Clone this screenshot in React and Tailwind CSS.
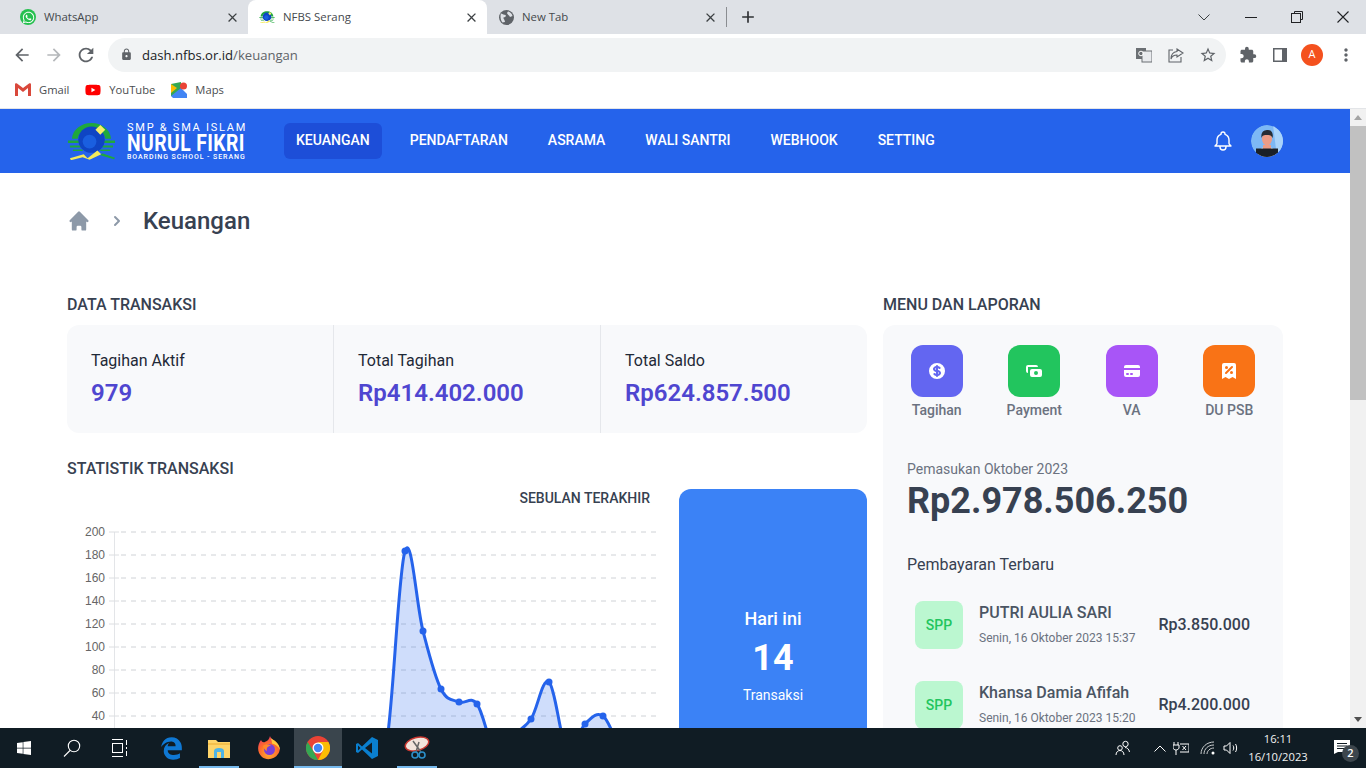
import React from "react";
import { HiCurrencyDollar, HiCash, HiCreditCard, HiReceiptTax, HiHome, HiChevronRight, HiOutlineBell } from "react-icons/hi";
import { MdArrowBack, MdArrowForward, MdRefresh, MdLock, MdStarBorder, MdExtension, MdClose, MdAdd, MdMoreVert } from "react-icons/md";
import { FaWhatsapp, FaWindows, FaYoutube, FaEdgeLegacy } from "react-icons/fa";

const ui = "font-['Open_Sans','Noto_Sans',sans-serif]";

function Logo({ size = 16 }) {
  return (
    <svg width={size} height={size * 0.78} viewBox="0 0 50 39">
      <path d="M5 17C6 7 15 1 25 1C35 1 44 7 45 17H39C38 11 32 7 25 7C18 7 12 11 11 17Z" fill="#1fa83c" />
      <path d="M1 19H13V21.5H1ZM3 24H14V26H3ZM6 28H16V29.5H6ZM37 19H49V21.5H37ZM36 24H47V26H36ZM34 28H44V29.5H34Z" fill="#1fa83c" />
      <circle cx="25" cy="18" r="13.5" fill="#0f45c4" />
      <circle cx="23" cy="20" r="7" fill="#1a5fe0" />
      <path d="M34 3L39 8L34 13L29 8Z" fill="#f6ee6a" />
      <path d="M3 37L17 33L21 37L31 29L35 33L23 38.5L16 36L4 39Z" fill="#f4ea5a" />
      <path d="M36 32L49 36.5L48 38L34 34Z" fill="#1fa83c" />
    </svg>
  );
}

function Tab({ icon, title, active }) {
  return (
    <div className={`w-[239px] h-[34px] flex items-center pl-[11px] pr-[8px] shrink-0 ${active ? "bg-white rounded-t-lg" : ""}`}>
      <span className="w-4 h-4 flex items-center justify-center shrink-0">{icon}</span>
      <span className="ml-[8px] text-[11.4px] text-[#45494d] flex-1 whitespace-nowrap">{title}</span>
      <MdClose className="text-[15px] text-[#3c4043]" />
    </div>
  );
}

function Bookmark({ icon, label }) {
  return (
    <div className="flex items-center gap-2 mr-[16px]">
      <span className="w-4 h-4 flex items-center justify-center">{icon}</span>
      <span className="text-[11.2px] text-[#4a4d50]">{label}</span>
    </div>
  );
}

function ChromeTop() {
  return (
    <div className={`${ui} shrink-0`}>
      <div className="h-[34px] bg-[#dee1e6] flex items-center pl-[9px]">
        <Tab
          icon={<span className="w-[16px] h-[16px] rounded-full bg-[#25c04f] flex items-center justify-center"><FaWhatsapp className="text-white text-[13px]" /></span>}
          title="WhatsApp"
        />
        <Tab active icon={<Logo />} title="NFBS Serang" />
        <Tab
          icon={
            <svg width="15" height="15" viewBox="0 0 15 15">
              <circle cx="7.5" cy="7.5" r="7.5" fill="#5f6368" />
              <path d="M2 3.5C4 4 5 5 6.5 5C7.5 6 6 7.5 4.5 7.5C4 9 6 9.5 6 12L3.5 12.5C1.5 10 1 6 2 3.5ZM9 1.5C11 2 13 3.5 13.5 6L11 7C10 5 8 4 8 3Z" fill="#dee1e6" />
            </svg>
          }
          title="New Tab"
        />
        <div className="w-px h-[20px] bg-[#8a8d91]" />
        <MdAdd className="text-[20px] text-[#2f3235] ml-[11px]" />
        <div className="flex-1" />
        <div className="flex items-center text-[#3c4043]">
          <svg width="12" height="7" viewBox="0 0 12 7" fill="none" stroke="#3c4043" className="mr-[35px]"><path d="M.5.5L6 6L11.5.5" /></svg>
          <div className="w-[12px] h-px bg-[#202124] mr-[34px]" />
          <svg width="12" height="12" viewBox="0 0 12 12" fill="none" stroke="#202124" className="mr-[34px]"><path d="M3.5 2.5V.5H11.5V8.5H9.5" /><rect x=".5" y="2.5" width="9" height="9" /></svg>
          <svg width="12" height="12" viewBox="0 0 12 12" stroke="#202124" strokeWidth="1.1" className="mr-[17px]"><path d="M.5.5L11.5 11.5M11.5.5L.5 11.5" /></svg>
        </div>
      </div>
      <div className="h-[41px] bg-white flex items-center pl-[12px]">
        <MdArrowBack className="text-[20px] text-[#5f6368] shrink-0" />
        <MdArrowForward className="text-[20px] text-[#b5b8bb] ml-[12px] shrink-0" />
        <MdRefresh className="text-[22px] text-[#5f6368] ml-[11px] shrink-0" />
        <div className="ml-[11px] w-[1118px] h-[34px] shrink-0 rounded-full bg-[#f1f3f4] flex items-center pl-[12px] pr-[9px]">
          <MdLock className="text-[13px] text-[#5f6368]" />
          <span className="ml-[9px] mt-[2px] text-[13.1px] text-[#202124] whitespace-nowrap">dash.nfbs.or.id<span className="text-[#5f6368]">/keuangan</span></span>
          <div className="flex-1" />
          <svg width="16" height="16" viewBox="0 0 16 16" className="mr-[16px]"><rect x="0" y="1" width="10" height="11" fill="#6b6f73" /><rect x="6" y="4" width="10" height="11" fill="#e8eaed" stroke="#6b6f73" /><circle cx="5" cy="6.5" r="2.3" fill="none" stroke="#fff" /></svg>
          <svg width="16" height="16" viewBox="0 0 16 16" fill="none" stroke="#5f6368" strokeWidth="1.1" className="mr-[15px]"><path d="M5 3H1V15H13V10" /><path d="M9 2L15 6L9 10V8C6 8 4 9 3 12C3 8 5 5 9 4.5Z" /></svg>
          <MdStarBorder className="text-[18px] text-[#5f6368]" />
        </div>
        <MdExtension className="text-[18px] text-[#5f6368] ml-[13px] shrink-0" />
        <svg width="14" height="14" viewBox="0 0 14 14" className="ml-[16px] shrink-0"><path d="M0 0H14V14H0ZM1.5 1.5V12.5H9V1.5Z" fill="#5f6368" fillRule="evenodd" /><rect x="9" y="1" width="4" height="12" fill="#5f6368" /></svg>
        <span className="ml-[14px] w-[22px] h-[22px] rounded-full bg-[#f4511e] text-white text-[11px] flex items-center justify-center shrink-0">A</span>
        <MdMoreVert className="text-[20px] text-[#5f6368] ml-[13px] shrink-0" />
      </div>
      <div className="h-[34px] bg-white flex items-center pl-[15px] pb-[3px] border-b border-[#e3e5e8]">
        <Bookmark
          label="Gmail"
          icon={<svg width="16" height="13" viewBox="0 0 16 13"><path d="M0 1.5C0 .5 1 0 2 .6L8 5L14 .6C15 0 16 .5 16 1.5V13H13V5L8 9L3 5V13H0Z" fill="#d9483b" /></svg>}
        />
        <Bookmark label="YouTube" icon={<FaYoutube className="text-[#f00] text-[18px]" />} />
        <Bookmark
          label="Maps"
          icon={<svg width="16" height="16" viewBox="0 0 16 16"><path d="M0 2L10 0V16L0 14Z" fill="#34a853" /><path d="M0 14L10 6L16 12V16H2Z" fill="#4285f4" /><path d="M0 2L6 6L0 11Z" fill="#fbbc04" /><circle cx="12.5" cy="4" r="3.5" fill="#ea4335" /></svg>}
        />
      </div>
    </div>
  );
}

const NAV = ["KEUANGAN", "PENDAFTARAN", "ASRAMA", "WALI SANTRI", "WEBHOOK", "SETTING"];

function Header() {
  return (
    <header className="h-16 bg-[#2563eb] flex items-center px-[67px] shrink-0">
      <div className="w-[178px] flex items-center shrink-0">
        <Logo size={49} />
        <div className="ml-[11px] text-white w-[118px] leading-none">
          <div className="text-[11px] leading-[12px] tracking-[1.75px] whitespace-nowrap">SMP &amp; SMA ISLAM</div>
          <div className="text-[23px] leading-[19px] font-bold whitespace-nowrap origin-left scale-x-[0.84] tracking-[0.5px]">NURUL FIKRI</div>
          <div className="text-[7px] leading-[8px] font-medium tracking-[0.93px] whitespace-nowrap">BOARDING SCHOOL - SERANG</div>
        </div>
      </div>
      <nav className="ml-[39px] flex items-center gap-4">
        {NAV.map((n, i) => (
          <div key={n} className={`h-9 px-3 pb-[2px] rounded-md flex items-center text-sm font-medium text-white ${i === 0 ? "bg-[#1d4ed8]" : ""}`}>{n}</div>
        ))}
      </nav>
      <div className="flex-1" />
      <HiOutlineBell className="text-white text-[24px] mr-[16px]" strokeWidth={1.4} />
      <svg width="32" height="32" viewBox="0 0 32 32" className="rounded-full">
        <circle cx="16" cy="16" r="16" fill="#7db8f5" />
        <path d="M22 0H32V32H26Z" fill="#a9d3fb" />
        <path d="M6 32C7 24 11 22 16 22C21 22 25 24 26 32Z" fill="#f4f6f8" />
        <path d="M12 20H20V24L16 27L12 24Z" fill="#ec9c86" />
        <ellipse cx="16" cy="14" rx="5" ry="6.5" fill="#ec9c86" />
        <path d="M10.5 13C9.5 6 14 5 17 5C21 5 22.5 9 21.5 13C20.5 10 18 10 16 10C13 10 11.5 10 10.5 13Z" fill="#262d36" />
        <rect x="5" y="23.5" width="22" height="8.5" fill="#1a2028" />
      </svg>
    </header>
  );
}

const pts = [[351, 770], [369, 770], [387, 740], [405, 551], [423, 631], [441, 689], [459, 702], [477, 704], [495, 750], [513, 735], [531, 719], [549, 682], [567, 750], [585, 724], [603, 716], [621, 750], [639, 770]];

function smooth(p) {
  const t = 0.18;
  let d = `M${p[0][0]} ${p[0][1]}`;
  for (let i = 0; i < p.length - 1; i++) {
    const a = p[Math.max(i - 1, 0)], b = p[i], c = p[i + 1], e = p[Math.min(i + 2, p.length - 1)];
    d += ` C${b[0] + (c[0] - a[0]) * t} ${b[1] + (c[1] - a[1]) * t} ${c[0] - (e[0] - b[0]) * t} ${c[1] - (e[1] - b[1]) * t} ${c[0]} ${c[1]}`;
  }
  return d;
}

function Chart() {
  const ticks = [200, 180, 160, 140, 120, 100, 80, 60, 40];
  const line = smooth(pts);
  return (
    <svg width="600" height="280" viewBox="67 520 600 280" className="block">
      <line x1="114.5" y1="532" x2="114.5" y2="780" stroke="#e3e5e8" />
      {ticks.map((v, i) => {
        const y = 532 + i * 23;
        return (
          <g key={v}>
            <line x1="109" x2="119" y1={y} y2={y} stroke="#dcdee1" />
            <line x1="121" x2="661" y1={y} y2={y} stroke="#cfd2d6" strokeDasharray="5 5" />
            <text x="105" y={y + 4} textAnchor="end" fontSize="12" fill="#666" fontFamily="'Liberation Sans',sans-serif">{v}</text>
          </g>
        );
      })}
      <path d={`${line} L639 780 L351 780 Z`} fill="#2563eb" fillOpacity="0.22" />
      <path d={line} fill="none" stroke="#2563eb" strokeWidth="3" />
      {pts.slice(2, -1).map(([x, y]) => <circle key={x} cx={x} cy={y} r="3.5" fill="#2563eb" />)}
    </svg>
  );
}

function Stat({ label, value, border }) {
  return (
    <div className={`flex-1 h-full pl-6 pt-[24px] ${border ? "border-l border-[#e5e7eb]" : ""}`}>
      <div className="text-base leading-[24px] text-[#1f2937]">{label}</div>
      <div className="text-2xl leading-[32px] font-semibold text-[#4f46d0] mt-[4px]">{value}</div>
    </div>
  );
}

function Left() {
  return (
    <div className="w-[800px] shrink-0">
      <h2 className="text-base leading-6 font-medium text-[#374151]">DATA TRANSAKSI</h2>
      <div className="mt-2 h-[108px] rounded-xl bg-[#f8f9fb] flex">
        <Stat label="Tagihan Aktif" value="979" />
        <Stat label="Total Tagihan" value="Rp414.402.000" border />
        <Stat label="Total Saldo" value="Rp624.857.500" border />
      </div>
      <h2 className="mt-6 text-base leading-6 font-medium text-[#374151]">STATISTIK TRANSAKSI</h2>
      <div className="mt-2 flex">
        <div className="w-[612px] shrink-0">
          <div className="pr-[29px] text-right text-sm leading-[18px] font-medium text-[#374151]">SEBULAN TERAKHIR</div>
          <div className="mt-[13px]"><Chart /></div>
        </div>
        <div className="w-[188px] h-[333px] rounded-xl bg-[#3b82f6] text-white flex flex-col items-center justify-center">
          <div className="text-lg leading-6 font-medium">Hari ini</div>
          <div className="text-4xl leading-[40px] font-bold mt-[7px]">14</div>
          <div className="text-sm leading-5 mt-[7px]">Transaksi</div>
        </div>
      </div>
    </div>
  );
}

function Menu({ icon, label, bg }) {
  return (
    <div className="flex flex-col items-center">
      <div className={`w-[52px] h-[52px] rounded-xl flex items-center justify-center text-white text-[20px] ${bg}`}>{icon}</div>
      <div className="mt-[3px] text-sm leading-5 font-medium text-[#6b7280]">{label}</div>
    </div>
  );
}

function Pay({ name, date, amount }) {
  return (
    <div className="flex items-center h-[48px] pl-2 pr-[9px] mb-[32px]">
      <div className="w-12 h-12 rounded-lg bg-[#bbf7d0] text-[#22c55e] text-sm font-medium flex items-center justify-center shrink-0">SPP</div>
      <div className="ml-4 flex-1">
        <div className="text-base leading-[22px] font-medium text-[#4b5563] whitespace-nowrap -mt-[3px]">{name}</div>
        <div className="text-xs leading-4 text-[#6b7280] mt-[6px] whitespace-nowrap">{date}</div>
      </div>
      <div className="text-base font-medium text-[#374151]">{amount}</div>
    </div>
  );
}

function Right() {
  return (
    <div className="w-[400px] shrink-0">
      <h2 className="text-base leading-6 font-medium text-[#374151]">MENU DAN LAPORAN</h2>
      <div className="mt-2 rounded-xl bg-[#f8f9fb] pt-5 h-[520px]">
        <div className="grid grid-cols-4 px-[5px]">
          <Menu bg="bg-[#6366f1]" label="Tagihan" icon={<HiCurrencyDollar className="text-[20px]" />} />
          <Menu bg="bg-[#22c55e]" label="Payment" icon={<HiCash className="text-[20px]" />} />
          <Menu bg="bg-[#a855f7]" label="VA" icon={<HiCreditCard className="text-[20px]" />} />
          <Menu bg="bg-[#f97316]" label="DU PSB" icon={<HiReceiptTax className="text-[20px]" />} />
        </div>
        <div className="px-6">
          <div className="mt-[39px] text-sm leading-5 text-[#6b7280]">Pemasukan Oktober 2023</div>
          <div className="mt-[2px] text-4xl leading-[40px] font-bold text-[#374151]">Rp2.978.506.250</div>
          <div className="mt-8 text-base leading-6 text-[#374151]">Pembayaran Terbaru</div>
          <div className="mt-6">
            <Pay name="PUTRI AULIA SARI" date="Senin, 16 Oktober 2023 15:37" amount="Rp3.850.000" />
            <Pay name="Khansa Damia Afifah" date="Senin, 16 Oktober 2023 15:20" amount="Rp4.200.000" />
          </div>
        </div>
      </div>
    </div>
  );
}

function Scrollbar() {
  return (
    <div className="w-4 shrink-0 bg-[#f1f1f1] flex flex-col items-center">
      <div className="h-[17px] flex items-center justify-center"><div className="w-0 h-0 border-x-[4px] border-x-transparent border-b-[5px] border-b-[#a3a3a3]" /></div>
      <div className="w-full h-[274px] bg-[#c1c1c1]" />
      <div className="flex-1" />
      <div className="h-[17px] flex items-center justify-center"><div className="w-0 h-0 border-x-[4px] border-x-transparent border-t-[5px] border-t-[#505050]" /></div>
    </div>
  );
}

function TaskBtn({ children, open, active, className = "" }) {
  return (
    <div className={`relative w-12 h-10 flex items-center justify-center shrink-0 ${active ? "bg-[#3a454d]" : ""} ${className}`}>
      {children}
      {open && <div className={`absolute bottom-0 h-[2px] bg-[#76b9ed] ${active ? "inset-x-0" : "inset-x-[4px]"}`} />}
    </div>
  );
}

function Taskbar() {
  return (
    <div className={`h-10 bg-[#101c24] flex items-center shrink-0 text-white ${ui}`}>
      <TaskBtn><FaWindows className="text-[16px]" /></TaskBtn>
      <TaskBtn>
        <svg width="18" height="18" viewBox="0 0 18 18" fill="none" stroke="#fff" strokeWidth="1.1"><circle cx="11" cy="7" r="5.7" /><path d="M7 11.5L1 17.5" /></svg>
      </TaskBtn>
      <TaskBtn>
        <svg width="18" height="18" viewBox="0 0 18 18" fill="none" stroke="#fff"><path d="M1 .5H12M1 17.5H12" /><rect x="1.5" y="4.5" width="10" height="9" /><path d="M15.5 1V6M15.5 8V10M15.5 12V17" /></svg>
      </TaskBtn>
      <TaskBtn className="ml-[3px]"><FaEdgeLegacy className="text-[#0f78d4] text-[23px]" /></TaskBtn>
      <TaskBtn open>
        <svg width="22" height="20" viewBox="0 0 22 20"><path d="M0 2H8L10 4H22V20H0Z" fill="#ffd56a" /><path d="M0 5H22V7H0Z" fill="#f5c04c" /><path d="M6 20V13C6 11 8 10 11 10C14 10 16 11 16 13V20H13V14H9V20Z" fill="#4fb4e6" /></svg>
      </TaskBtn>
      <TaskBtn className="ml-[2px]">
        <svg width="24" height="24" viewBox="0 0 24 24">
          <defs>
            <radialGradient id="ff" cx="0.5" cy="0.75" r="0.8"><stop offset="0" stopColor="#ffb32c" /><stop offset="0.55" stopColor="#ff6a2c" /><stop offset="1" stopColor="#e8336d" /></radialGradient>
          </defs>
          <path d="M4 4C5 6 6 6.5 8 6C10 5 12 4 13 0C14 3 15 3 18 5C23 9 24 14 21 18C18 23 10 25 5 21C0 17 0 9 4 4Z" fill="url(#ff)" />
          <path d="M13 0C14 3 15 3 18 5C21 7.5 23 11 23 14C21 10 18 8 15 7.5C15 5 14 3 13 0Z" fill="#ffc93c" />
          <circle cx="12.5" cy="13.5" r="5.5" fill="#7b3fd6" />
          <path d="M6 10C8 8 12 8 14 9.5C11 10 9 12 10 15C8 14 6.5 12.5 6 10Z" fill="#ff8a2c" />
        </svg>
      </TaskBtn>
      <TaskBtn open active className="ml-px">
        <svg width="24" height="24" viewBox="0 0 24 24">
          <circle cx="12" cy="12" r="12" fill="#ea4335" />
          <path d="M12 24A12 12 0 0 1 1.6 6L7 14.5L12 24Z" fill="#34a853" />
          <path d="M12 24A12 12 0 0 0 22.4 6H12L17 14.5Z" fill="#fbbc04" />
          <circle cx="12" cy="12" r="5.5" fill="#fff" />
          <circle cx="12" cy="12" r="4.2" fill="#4285f4" />
        </svg>
      </TaskBtn>
      <TaskBtn className="ml-px">
        <svg width="24" height="24" viewBox="0 0 24 24">
          <path d="M17 1L23 4V20L17 23L7 13.5L3 17L1 16V8L3 7L7 10.5Z" fill="#0a7fcf" />
          <path d="M17 6.5L10 12L17 17.5Z" fill="#101c24" />
          <path d="M3 9.5L5.5 12L3 14.5Z" fill="#101c24" />
        </svg>
      </TaskBtn>
      <TaskBtn open className="ml-[2px]">
        <svg width="26" height="24" viewBox="0 0 26 24">
          <ellipse cx="13" cy="8" rx="12" ry="6.5" transform="rotate(-15 13 8)" fill="#f2e4dc" stroke="#c9362f" strokeWidth="1.5" />
          <path d="M9 5L17 16M15 6L12 16" stroke="#666" strokeWidth="1.5" />
          <circle cx="11" cy="19" r="3" fill="none" stroke="#2b8fc9" strokeWidth="1.6" />
          <circle cx="18" cy="19" r="3" fill="none" stroke="#2b8fc9" strokeWidth="1.6" />
        </svg>
      </TaskBtn>
      <div className="flex-1" />
      <svg width="16" height="16" viewBox="0 0 16 16" fill="none" stroke="#fff" className="mr-[23px]"><circle cx="10.5" cy="4" r="2.7" /><circle cx="5" cy="8" r="2.3" /><path d="M14.5 12C14 9 12 7.5 10 7.5M1 15C1 12 3 10.5 5 10.5S9 12 9 15" /></svg>
      <svg width="12" height="7" viewBox="0 0 12 7" fill="none" stroke="#fff" className="mr-[7px]"><path d="M.5 6.5L6 1L11.5 6.5" /></svg>
      <svg width="16" height="14" viewBox="0 0 16 14" fill="none" stroke="#fff" className="mr-[11px]"><path d="M1 1V4M5 1V4M0 4H6V7C6 8 4 9 3 9S0 8 0 7ZM3 9V14" /><path d="M7 3H16V11H7" /><path d="M9.5 5L13 9M13 5L9.5 9" /></svg>
      <svg width="16" height="14" viewBox="0 0 16 14" fill="none" stroke="#c9ccce" className="mr-[7px]"><path d="M1 13C1 6 7 1 14 1M4 13C4 8 8 4 14 4M7 13C7 10 10 7 14 7" /><circle cx="13" cy="12" r="1.5" fill="#fff" stroke="none" /></svg>
      <svg width="16" height="14" viewBox="0 0 16 14" fill="none" stroke="#fff" className="mr-[8px]"><path d="M1 5V9H3.5L7 12.5V1.5L3.5 5Z" /><path d="M10 4.5C11 6 11 8 10 9.5M12.5 3C14 5 14 9 12.5 11" /></svg>
      <div className="w-[62px] text-center text-[11.2px] leading-[18px] text-[#f2f2f2] -mt-px">
        <div>16:11</div>
        <div className="whitespace-nowrap">16/10/2023</div>
      </div>
      <div className="relative w-[46px] ml-[11px] h-10 flex items-center">
        <svg width="16" height="14" viewBox="0 0 16 14" className="ml-[14px] -mt-[3px]"><path d="M0 0H16V12H4L0 14Z" fill="#fff" /><path d="M3 3.5H13M3 6H13M3 8.5H13" stroke="#101c24" /></svg>
        <span className="absolute left-[22px] top-[17px] w-[17px] h-[17px] rounded-full bg-[#3d464d] text-[11px] font-semibold flex items-center justify-center">2</span>
      </div>
    </div>
  );
}

export default function App() {
  return (
    <div className="h-screen w-full overflow-hidden flex flex-col bg-white font-['Roboto',sans-serif]">
      <ChromeTop />
      <div className="flex-1 flex min-h-0">
        <main className="flex-1 min-w-0 overflow-hidden">
          <Header />
          <div className="px-[67px]">
            <div className="flex items-center h-8 mt-8">
              <HiHome className="text-[24px] text-[#8d99a8]" />
              <HiChevronRight className="ml-4 text-[20px] text-[#8d99a8]" />
              <h1 className="ml-4 text-2xl font-medium text-[#374151]">Keuangan</h1>
            </div>
            <div className="mt-14 flex gap-4">
              <Left />
              <Right />
            </div>
          </div>
        </main>
        <Scrollbar />
      </div>
      <Taskbar />
    </div>
  );
}
